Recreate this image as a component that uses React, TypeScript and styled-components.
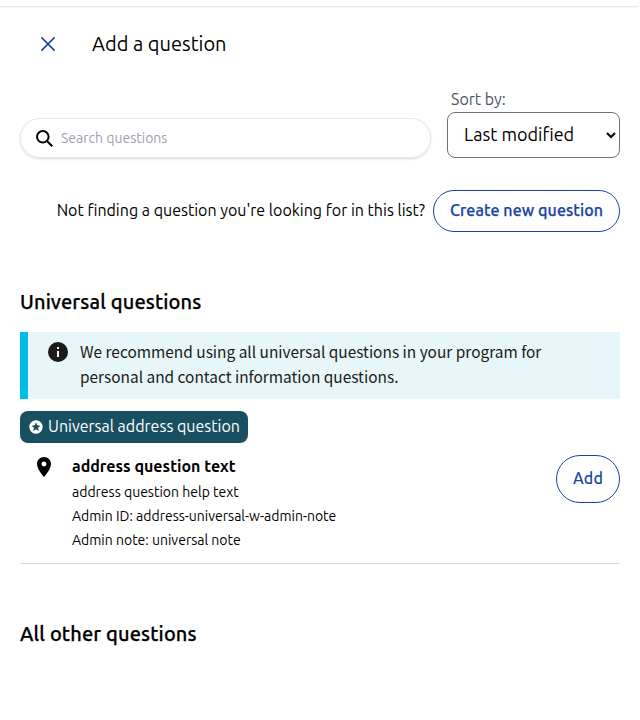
import React from "react";
import styled, { createGlobalStyle } from "styled-components";

const GlobalStyle = createGlobalStyle`
  *, *::before, *::after { box-sizing: border-box; }
  html, body { margin: 0; background: #fff; }
  body {
    color: #000;
    font-family: Ubuntu, "Noto Sans", sans-serif;
    font-size: 16px;
    line-height: 24px;
  }
  h1, h2, h3, p { margin: 0; font-size: inherit; font-weight: inherit; }
  button, input, select { font: inherit; }
`;

const Page = styled.div`
  height: 720px;
  overflow: hidden;
`;

const TopEdge = styled.div`
  height: 6px;
  margin-right: 2px;
  box-shadow: 0 1px 3px rgba(0, 0, 0, 0.08), 0 1px 1px rgba(0, 0, 0, 0.04);
`;

const Panel = styled.main`
  padding: 14px 20px 0;
`;

const Header = styled.header`
  display: flex;
  align-items: center;
  gap: 20px;
  height: 48px;
`;

const CloseButton = styled.button`
  display: flex;
  align-items: center;
  justify-content: center;
  width: 48px;
  height: 48px;
  margin-left: 4px;
  padding: 0;
  border: 0;
  background: transparent;
  color: #1a44a3;
`;

const Title = styled.h1`
  font-size: 20px;
  line-height: 28px;
`;

const Filters = styled.div`
  display: flex;
  align-items: flex-end;
  gap: 16px;
  margin-top: 19px;
`;

const SearchBox = styled.label`
  display: flex;
  flex: 1;
  align-items: center;
  gap: 8px;
  height: 40px;
  padding: 0 15px;
  border: 1px solid #e5e7eb;
  border-radius: 20px;
  box-shadow: 0 1px 3px rgba(0, 0, 0, 0.1), 0 1px 2px rgba(0, 0, 0, 0.06);
`;

const SearchInput = styled.input`
  flex: 1;
  min-width: 0;
  padding: 0;
  border: 0;
  outline: 0;
  background: transparent;
  font-size: 14px;
  line-height: 20px;
  &::placeholder { color: #9ca3af; opacity: 1; }
`;

const SortField = styled.label`
  display: flex;
  flex-direction: column;
  width: 173px;
`;

const SortLabel = styled.span`
  padding-left: 4px;
  height: 25px;
  color: #4b5563;
`;

const Select = styled.select`
  height: 46px;
  padding: 0 0 2px 12px;
  border: 1px solid #6b7280;
  border-radius: 8px;
  background: #fff;
  color: #000;
  font-size: 18px;
`;

const CreateRow = styled.div`
  display: flex;
  align-items: center;
  justify-content: flex-end;
  gap: 8px;
  margin-top: 32px;
`;

const CreateHint = styled.p`
  padding-bottom: 2px;
`;

const OutlineButton = styled.button<{ $width: number; $height: number; $stroke: number }>`
  display: flex;
  align-items: center;
  justify-content: center;
  flex-shrink: 0;
  width: ${(p) => p.$width}px;
  height: ${(p) => p.$height}px;
  padding: 0 0 2px;
  border: 1px solid #1a44a3;
  border-radius: 24px;
  background: #fff;
  color: #1a44a3;
  font-weight: 500;
  letter-spacing: 0.08px;
  -webkit-text-stroke: ${(p) => p.$stroke}px currentColor;
`;

const SectionTitle = styled.h2`
  margin-top: 56px;
  font-size: 20px;
  font-weight: 500;
  letter-spacing: 0.14px;
  line-height: 28px;
  -webkit-text-stroke: 0.25px currentColor;
`;

const Alert = styled.div`
  display: flex;
  gap: 8px;
  height: 67px;
  margin-top: 16px;
  padding: 8px 60px 8px 16px;
  border-left: 8px solid #00bde3;
  background: #e7f6f8;
  color: #1b1b1b;
`;

const AlertText = styled.p`
  margin-top: -1px;
  font-family: "Source Sans Pro", "Noto Sans CJK SC", sans-serif;
  font-size: 15.43px;
  line-height: 25.4px;
`;

const AlertIcon = styled.svg`
  flex-shrink: 0;
  width: 24px;
  height: 24px;
  margin: 0 2px;
`;

const Badge = styled.div`
  display: flex;
  align-items: center;
  gap: 4px;
  width: 228px;
  height: 32px;
  margin-top: 12px;
  padding: 0 8px;
  border-radius: 8px;
  background: #185062;
  color: #fff;
  white-space: nowrap;
`;

const BadgeLabel = styled.span`
  padding-bottom: 3px;
`;

const QuestionRow = styled.article`
  display: flex;
  align-items: flex-start;
  height: 121px;
  padding: 12px 0 0 12px;
  border-bottom: 1px solid #d1d5db;
`;

const Details = styled.div`
  flex: 1;
  margin: -1px 0 0 16px;
`;

const QuestionName = styled.h3`
  margin-bottom: 2px;
  font-weight: 700;
`;

const Meta = styled.p`
  font-size: 14px;
  line-height: 24px;
`;

export default function App() {
  return (
    <>
      <GlobalStyle />
      <Page>
        <TopEdge />
        <Panel>
          <Header>
            <CloseButton aria-label="Close">
              <svg width="24" height="24" viewBox="0 0 24 24" fill="none" stroke="currentColor" strokeWidth="1.6">
                <path d="M5.4 5.4 18.6 18.6M18.6 5.4 5.4 18.6" />
              </svg>
            </CloseButton>
            <Title>Add a question</Title>
          </Header>

          <Filters>
            <SearchBox>
              <svg width="17" height="17" viewBox="0 0 17 17" fill="none" stroke="#000" strokeWidth="2">
                <circle cx="6.8" cy="6.8" r="5.8" />
                <path d="m11 11 5.2 5.2" />
              </svg>
              <SearchInput placeholder="Search questions" />
            </SearchBox>
            <SortField>
              <SortLabel>Sort by:</SortLabel>
              <Select defaultValue="modified">
                <option value="modified">Last modified</option>
              </Select>
            </SortField>
          </Filters>

          <CreateRow>
            <CreateHint>Not finding a question you're looking for in this list?</CreateHint>
            <OutlineButton $width={187} $height={42} $stroke={0.25}>Create new question</OutlineButton>
          </CreateRow>

          <SectionTitle>Universal questions</SectionTitle>
          <Alert>
            <AlertIcon viewBox="0 0 24 24" fill="currentColor">
              <path d="M12 2a10 10 0 1 0 0 20 10 10 0 0 0 0-20zm1 15h-2v-6h2v6zm0-8h-2V7h2v2z" />
            </AlertIcon>
            <AlertText>
              We recommend using all universal questions in your program for
              <br />
              personal and contact information questions.
            </AlertText>
          </Alert>
          <Badge>
            <svg width="16" height="16" viewBox="0 0 24 24" fill="currentColor">
              <path d="M11.99 2C6.47 2 2 6.48 2 12s4.47 10 9.99 10C17.52 22 22 17.52 22 12S17.52 2 11.99 2zm4.24 16L12 15.45 7.77 18l1.12-4.81-3.73-3.23 4.92-.42L12 5l1.92 4.53 4.92.42-3.73 3.23L16.23 18z" />
            </svg>
            <BadgeLabel>Universal address question</BadgeLabel>
          </Badge>
          <QuestionRow>
            <svg width="24" height="24" viewBox="0 0 24 24" fill="#000">
              <path d="M12 2C8.13 2 5 5.13 5 9c0 5.25 7 13 7 13s7-7.75 7-13c0-3.87-3.13-7-7-7zm0 9.5a2.5 2.5 0 0 1 0-5 2.5 2.5 0 0 1 0 5z" />
            </svg>
            <Details>
              <QuestionName>address question text</QuestionName>
              <Meta>address question help text</Meta>
              <Meta>Admin ID: address-universal-w-admin-note</Meta>
              <Meta>Admin note: universal note</Meta>
            </Details>
            <OutlineButton $width={64} $height={48} $stroke={0}>Add</OutlineButton>
          </QuestionRow>

          <SectionTitle>All other questions</SectionTitle>
        </Panel>
      </Page>
    </>
  );
}
